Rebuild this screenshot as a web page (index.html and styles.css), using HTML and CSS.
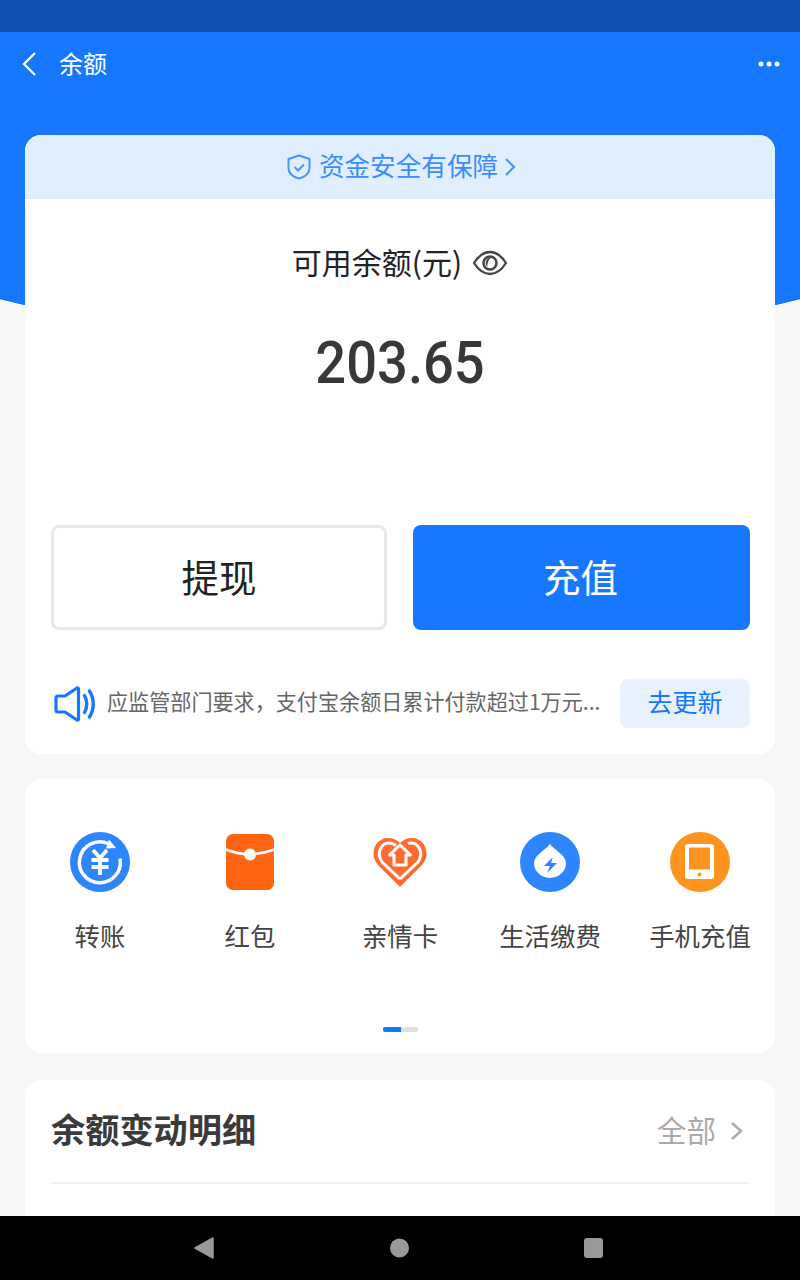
FILE: index.html
```html
<!DOCTYPE html>
<html lang="zh-CN">
<head>
    <meta charset="UTF-8">
    <meta name="viewport" content="width=device-width, initial-scale=1.0">
    <title>余额</title>
    <link rel="stylesheet" href="styles.css">
</head>
<body>
    <div class="status-bar"></div>

    <header class="nav">
        <svg class="nav-back" width="16" height="26" viewBox="0 0 16 26"><path d="M14 2 3 13l11 11" fill="none" stroke="#fff" stroke-width="2.2"/></svg>
        <span class="nav-title">余额</span>
        <svg class="nav-more" width="22" height="6" viewBox="0 0 22 6"><circle cx="3" cy="3" r="2.5" fill="#fff"/><circle cx="11" cy="3" r="2.5" fill="#fff"/><circle cx="19" cy="3" r="2.5" fill="#fff"/></svg>
    </header>

    <main class="content">
        <section class="card balance-card">
            <div class="safe-banner">
                <svg width="24" height="26" viewBox="0 0 24 26"><path d="M12 1.500 22.500 5v9c0 5.500-5 9-10.500 10.500C6.500 23 1.500 19.500 1.500 14V5z" fill="none" stroke="#4a94ff" stroke-width="2" stroke-linejoin="round"/><path d="m7.500 13 3.500 3.500 6-6" fill="none" stroke="#4a94ff" stroke-width="2"/></svg>
                <span class="safe-text">资金安全有保障</span>
                <svg class="safe-arrow" width="12" height="20" viewBox="0 0 12 20"><path d="m2 2 8 8-8 8" fill="none" stroke="#4a94ff" stroke-width="2.200"/></svg>
            </div>

            <div class="balance-label">
                <span class="balance-title">可用余额(元)</span>
                <svg width="36" height="26" viewBox="0 0 36 26"><path d="M2 13C6.500 6 12 2 18 2s11.500 4 16 11c-4.500 7-10 11-16 11S6.500 20 2 13z" fill="none" stroke="#444" stroke-width="2.300" stroke-linejoin="round"/><circle cx="18" cy="13" r="6.500" fill="none" stroke="#444" stroke-width="2.500"/><path d="M19 7.500a5.500 5.500 0 0 0-3.500 9.500c-.5-3 .5-6.500 3.500-9.500z" fill="#444"/></svg>
            </div>
            <div class="balance-amount"><span class="amount-num">203.65</span></div>

            <div class="actions">
                <div class="btn btn-outline">提现</div>
                <div class="btn btn-primary">充值</div>
            </div>

            <div class="notice">
                <svg width="42" height="36" viewBox="0 0 42 36"><path d="M2 12a2 2 0 0 1 2-2h7l12-8a1 1 0 0 1 1.500 1v30a1 1 0 0 1-1.500 1l-12-8H4a2 2 0 0 1-2-2z" fill="none" stroke="#1677ff" stroke-width="3.200" stroke-linejoin="round"/><path d="M30.500 9.500c3 5 3 12 0 17M35.500 5c5 8 5 18 0 26" fill="none" stroke="#1677ff" stroke-width="3.400" stroke-linecap="round"/></svg>
                <span class="notice-text">应监管部门要求，支付宝余额日累计付款超过1万元...</span>
                <div class="notice-btn">去更新</div>
            </div>
        </section>

        <section class="card shortcut-card">
            <div class="shortcuts">
                <div class="shortcut">
                    <svg width="60" height="60" viewBox="0 0 60 60"><circle cx="30" cy="30" r="30" fill="#2e86ff"/><path d="M50 26.500A20.500 20.500 0 1 1 38 11.500" fill="none" stroke="#fff" stroke-width="3.500"/><path d="m39 7.500 7 8.500-10 .5z" fill="#fff"/><path d="m23 18 7 8 7-8M21.500 28h17M21.500 35h17M30 26v17" fill="none" stroke="#fff" stroke-width="3.800"/></svg>
                    <span>转账</span>
                </div>
                <div class="shortcut">
                    <svg width="60" height="60" viewBox="0 0 60 60"><rect x="6" y="2" width="48" height="56" rx="7" fill="#ff6412"/><path d="M6 17.500Q30 27 54 17.500" fill="none" stroke="#fff" stroke-width="2.500"/><circle cx="30" cy="22.500" r="6" fill="#fff"/></svg>
                    <span>红包</span>
                </div>
                <div class="shortcut">
                    <svg width="60" height="60" viewBox="0 0 60 60"><path d="M30 55 8 33C-2 21 6 6 18 6c5 0 9 2 12 5 3-3 7-5 12-5 12 0 20 15 10 27z" fill="#ff6a33"/><path d="M30 47 12 30C6 21 11 11 19 11c3 0 5 1 7 2.500" fill="none" stroke="#fff" stroke-width="3"/><path d="M30 47 48 30c6-9 1-19-7-19-1 0-2 0-3 .5" fill="none" stroke="#fff" stroke-width="3"/><path d="m19.500 23 10.500-10 10.500 10H36v10H24V23z" fill="#ff6a33" stroke="#fff" stroke-width="3" stroke-linejoin="round"/></svg>
                    <span>亲情卡</span>
                </div>
                <div class="shortcut">
                    <svg width="60" height="60" viewBox="0 0 60 60"><circle cx="30" cy="30" r="30" fill="#2e86ff"/><path d="M30 12c3 5 16 11 16 19a16 15 0 0 1-32 0c0-8 13-14 16-19z" fill="#fff"/><path d="m33 25-9 9h6l-3 7 10-10h-6z" fill="#2e86ff"/></svg>
                    <span>生活缴费</span>
                </div>
                <div class="shortcut">
                    <svg width="60" height="60" viewBox="0 0 60 60"><circle cx="30" cy="30" r="30" fill="#ff9320"/><rect x="15" y="12" width="29" height="35" rx="3" fill="#fff"/><rect x="19" y="15.500" width="21" height="22" fill="#ff9320"/><circle cx="29.500" cy="42.500" r="2" fill="#ff9320"/></svg>
                    <span>手机充值</span>
                </div>
            </div>
            <div class="pager"><span class="pager-on"></span></div>
        </section>

        <section class="card detail-card">
            <div class="detail-head">
                <h2>余额变动明细</h2>
                <span class="detail-all">全部</span>
                <svg width="14" height="20" viewBox="0 0 14 20"><path d="m2 2 9 8-9 8" fill="none" stroke="#aaa" stroke-width="2.500"/></svg>
            </div>
        </section>
    </main>

    <footer class="sys-nav">
        <svg width="24" height="22" viewBox="0 0 24 22"><path d="M22 1v20L4 11z" fill="#999" stroke="#999" stroke-width="1.500" stroke-linejoin="round"/></svg>
        <svg width="19" height="20" viewBox="0 0 19 20"><circle cx="9.500" cy="10" r="9.500" fill="#999"/></svg>
        <svg width="19" height="20" viewBox="0 0 19 20"><rect width="19" height="20" rx="3" fill="#999"/></svg>
    </footer>
</body>
</html>
```

FILE: styles.css
```css
* {
    box-sizing: border-box;
}

html, body {
    height: 100%;
}

body {
    margin: 0;
    display: flex;
    flex-direction: column;
    height: 1280px;
    overflow: hidden;
    font-family: "Noto Sans CJK SC", "Noto Sans", sans-serif;
    background-color: #f7f7f7;
    background-image: radial-gradient(ellipse 800px 346px at 50% 0, #1677ff 99.8%, transparent 100%);
    background-repeat: no-repeat;
}

.status-bar {
    height: 32px;
    flex: none;
    background-color: #1050b0;
}

.nav {
    height: 64px;
    flex: none;
    display: flex;
    align-items: center;
    padding: 0 20px 0 21px;
    color: white;
}

.nav-title {
    margin-left: 22px;
    font-size: 24px;
    line-height: 62px;
    padding-bottom: 2px;
}

.nav-more {
    margin-left: auto;
}

.content {
    flex: 1;
    min-height: 0;
    overflow: hidden;
    padding: 39px 25px 0;
}

.card {
    background-color: white;
    border-radius: 16px;
}

.balance-card {
    padding-bottom: 26px;
    overflow: hidden;
}

.safe-banner {
    height: 64px;
    display: flex;
    align-items: center;
    justify-content: center;
    gap: 8px;
    padding-left: 3px;
    background-color: #e1eeff;
    color: #3c8cff;
    font-size: 25.6px;
}

.safe-text {
    padding-bottom: 6px;
}

.safe-arrow {
    margin-left: -2px;
}

.balance-label {
    margin-top: 44px;
    height: 40px;
    display: flex;
    align-items: center;
    justify-content: center;
    gap: 10px;
    font-size: 30px;
    color: #222;
}

.balance-title {
    padding-bottom: 4px;
}

.balance-amount {
    margin-top: 45px;
    height: 70px;
    line-height: 70px;
    text-align: center;
    font-family: Roboto, sans-serif;
    font-weight: 500;
    font-size: 59px;
    color: #383838;
}

.amount-num {
    display: inline-block;
    transform: scaleX(0.92);
}

.actions {
    margin-top: 127px;
    padding: 0 25px 0 26px;
    display: grid;
    grid-template-columns: 336px 337px;
    gap: 26px;
}

.btn {
    height: 105px;
    display: flex;
    align-items: center;
    justify-content: center;
    padding-bottom: 4px;
    border-radius: 8px;
    font-size: 37.5px;
}

.btn-outline {
    border: 3px solid #e8e8e8;
    color: #222;
}

.btn-primary {
    background-color: #1677ff;
    color: white;
    padding-right: 2px;
}

.notice {
    margin-top: 49px;
    padding: 0 25px 0 29px;
    height: 49px;
    display: flex;
    align-items: center;
}

.notice-text {
    margin-left: 11px;
    padding-bottom: 6px;
    flex: 1;
    font-size: 21.1px;
    color: #666;
    white-space: nowrap;
    overflow: hidden;
}

.notice-btn {
    width: 130px;
    height: 49px;
    line-height: 45px;
    text-align: center;
    background-color: #e8f1fe;
    border-radius: 8px;
    color: #1677ff;
    font-size: 25px;
}

.shortcut-card {
    margin-top: 25px;
    padding: 53px 0 21px;
}

.shortcuts {
    display: grid;
    grid-template-columns: repeat(5, 150px);
}

.shortcut {
    display: flex;
    flex-direction: column;
    align-items: center;
    gap: 25px;
    font-size: 25.4px;
    line-height: 36px;
    color: #444;
    white-space: nowrap;
}

.pager {
    margin: 74px auto 0;
    width: 35px;
    height: 5px;
    border-radius: 2px;
    background-color: #e0e0e0;
    overflow: hidden;
}

.pager-on {
    display: block;
    width: 18px;
    height: 5px;
    background-color: #1677ff;
}

.detail-card {
    margin-top: 27px;
    padding: 0 26px;
    height: 200px;
}

.detail-head {
    height: 104px;
    display: flex;
    align-items: center;
    padding-right: 5px;
    border-bottom: 2px solid #f2f2f2;
}

.detail-head h2 {
    margin: 0 0 6px 0;
    font-size: 34.2px;
    font-weight: 700;
    color: #3a3a3a;
}

.detail-all {
    margin-left: auto;
    margin-right: 14px;
    margin-bottom: 4px;
    font-size: 29.6px;
    color: #aaa;
}

.sys-nav {
    height: 64px;
    flex: none;
    background-color: black;
    display: grid;
    grid-template-columns: 24px 19px 19px;
    justify-content: start;
    align-items: center;
    column-gap: 175px;
    padding-left: 191px;
}
```
